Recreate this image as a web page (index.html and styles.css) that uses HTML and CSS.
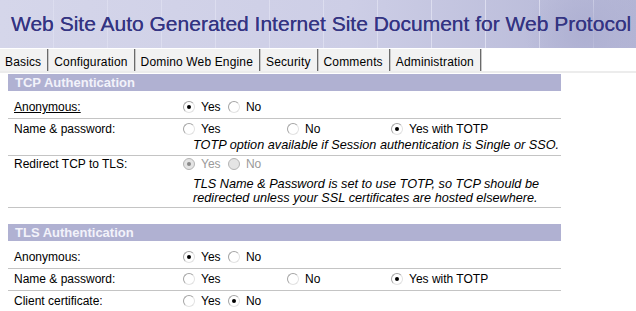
FILE: index.html
```html
<!DOCTYPE html>
<html lang="en">

<head>
    <meta charset="UTF-8">
    <title>Web Protocol</title>
    <link rel="stylesheet" href="styles.css">
</head>

<body>
    <div class="banner">
        <h1>Web Site Auto Generated Internet Site Document for Web Protocol</h1>
    </div>

    <div class="tabs">
        <span class="tab">Basics</span>
        <span class="tab">Configuration</span>
        <span class="tab">Domino Web Engine</span>
        <span class="tab">Security</span>
        <span class="tab">Comments</span>
        <span class="tab">Administration</span>
    </div>

    <div class="form">
        <div class="section">TCP Authentication</div>

        <div class="row first">
            <div class="label"><u>Anonymous:</u></div>
            <div class="value">
                <span class="opt"><i class="radio on"></i>Yes</span>
                <span class="opt"><i class="radio"></i>No</span>
            </div>
        </div>

        <div class="row">
            <div class="label">Name &amp; password:</div>
            <div class="value">
                <div class="cols">
                    <span class="opt"><i class="radio"></i>Yes</span>
                    <span class="opt"><i class="radio"></i>No</span>
                    <span class="opt"><i class="radio on"></i>Yes with TOTP</span>
                </div>
                <p class="note">TOTP option available if Session authentication is Single or SSO.</p>
            </div>
        </div>

        <div class="row tight">
            <div class="label">Redirect TCP to TLS:</div>
            <div class="value">
                <span class="opt off"><i class="radio on"></i>Yes</span>
                <span class="opt off"><i class="radio"></i>No</span>
                <p class="note spaced">TLS Name &amp; Password is set to use TOTP, so TCP should be<br>redirected unless your SSL certificates are hosted elsewhere.</p>
            </div>
        </div>

        <div class="section gap">TLS Authentication</div>

        <div class="row first">
            <div class="label">Anonymous:</div>
            <div class="value">
                <span class="opt"><i class="radio on"></i>Yes</span>
                <span class="opt"><i class="radio"></i>No</span>
            </div>
        </div>

        <div class="row">
            <div class="label">Name &amp; password:</div>
            <div class="value">
                <div class="cols">
                    <span class="opt"><i class="radio"></i>Yes</span>
                    <span class="opt"><i class="radio"></i>No</span>
                    <span class="opt"><i class="radio on"></i>Yes with TOTP</span>
                </div>
            </div>
        </div>

        <div class="row last">
            <div class="label">Client certificate:</div>
            <div class="value">
                <span class="opt"><i class="radio"></i>Yes</span>
                <span class="opt"><i class="radio on"></i>No</span>
            </div>
        </div>
    </div>
</body>

</html>
```

FILE: styles.css
```css
* {
    margin: 0;
    padding: 0;
    box-sizing: border-box;
}
body {
    background: #fff;
    color: #000;
    font-family: "Liberation Sans", Arial, sans-serif;
    font-size: 12px;
    overflow: hidden;
}
.banner {
    height: 48px;
    padding: 12px 0 0 11px;
    background:
        radial-gradient(circle at 92% 70%, #aeb0d2 0, transparent 60px),
        repeating-linear-gradient(90deg, transparent 0 53px, #dcddef 53px 54px),
        linear-gradient(90deg, #d5d6ea, #cdcee6 55%, #b3b5d5);
}
.banner h1 {
    font-size: 21px;
    font-weight: normal;
    line-height: 24px;
    color: #343482;
    text-shadow: 0 0 0.6px #3a3a88;
    white-space: nowrap;
}
.tabs {
    display: flex;
    margin-top: 1px;
    height: 24px;
    border-bottom: 2px solid #ececec;
}
.tab {
    height: 22px;
    padding: 5px 6px 0 5px;
    line-height: 16px;
    letter-spacing: 0.15px;
    background: #f2f2f2;
    border-right: 1px solid #6a6a6a;
    box-shadow: 1px 0 0 #c8c8c8;
    margin-right: 1px;
}
.form {
    width: 553px;
    margin: 1px 0 0 8px;
}
.section {
    height: 17px;
    padding: 1px 0 0 7px;
    background: #b0b1d2;
    color: #f2f2fa;
    font-weight: bold;
    font-size: 13px;
    line-height: 15px;
}
.section.gap {
    margin-top: 16px;
}
.row {
    display: flex;
    border-bottom: 1px solid #c4c4c4;
    padding: 2px 0;
}
.row.first {
    padding-top: 8px;
}
.row.tight {
    padding-top: 0;
}
.row.last {
    border-bottom: none;
}
.label {
    width: 175px;
    padding-left: 6px;
    line-height: 17px;
}
.value {
    flex: 1;
    line-height: 17px;
}
.cols {
    display: grid;
    grid-template-columns: 104px 104px 1fr;
}
.opt {
    margin-right: 4px;
}
.opt.off {
    color: #9a9a9a;
}
.radio {
    display: inline-block;
    position: relative;
    width: 12px;
    height: 12px;
    margin-right: 6px;
    vertical-align: -2px;
    border-radius: 50%;
    border: 1px solid #a4a4a4;
    border-bottom-color: #e2e2e2;
    border-right-color: #e2e2e2;
    background: #fff;
}
.radio.on::after {
    content: "";
    position: absolute;
    left: 3px;
    top: 3px;
    width: 4px;
    height: 4px;
    border-radius: 50%;
    background: #000;
}
.off .radio {
    background: #e4e4e4;
    border-color: #b4b4b4;
}
.off .radio.on::after {
    background: #8a8a8a;
}
.note {
    font-style: italic;
    font-size: 12.7px;
    padding-left: 10px;
    line-height: 15px;
}
.note.spaced {
    line-height: 14px;
    margin-top: 4px;
}
```
